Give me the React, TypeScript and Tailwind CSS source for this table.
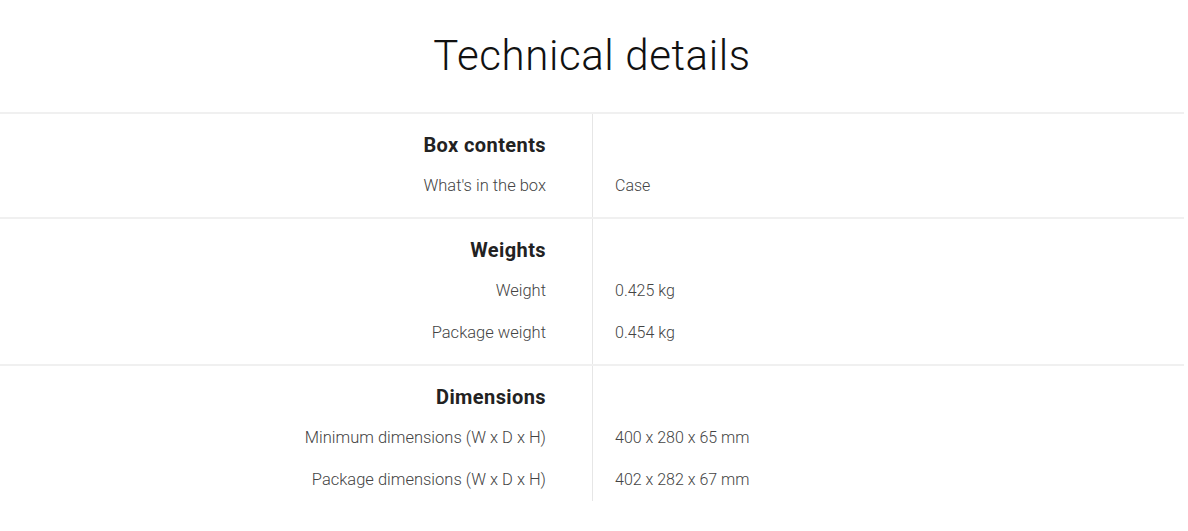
const sections = [
  {
    title: "Box contents",
    rows: [["What's in the box", "Case"]],
  },
  {
    title: "Weights",
    rows: [
      ["Weight", "0.425 kg"],
      ["Package weight", "0.454 kg"],
    ],
  },
  {
    title: "Dimensions",
    rows: [
      ["Minimum dimensions (W x D x H)", "400 x 280 x 65 mm"],
      ["Package dimensions (W x D x H)", "402 x 282 x 67 mm"],
    ],
  },
];

export default function App() {
  return (
    <div className="w-[1184px] bg-white font-['Roboto',sans-serif] text-[#333]">
      <h2 className="h-[112px] pb-[2px] flex items-center justify-center text-[42px] font-light text-[#111] tracking-[0.6px]">
        Technical details
      </h2>

      <div>
        {sections.map((section, i) => {
          const last = i === sections.length - 1;
          return (
            <div key={section.title} className="border-t-2 border-[#f0f0f0]">
              <div className="grid grid-cols-2">
                <div className="pt-[11px] pr-[46px]">
                  <div className="h-10 flex items-center justify-end text-[20px] font-bold text-[#222] tracking-[0.4px]">
                    {section.title}
                  </div>
                </div>
                <div className="border-l border-[#e6e6e6]" />
              </div>
              {section.rows.map(([label, value]) => (
                <div key={label} className="grid grid-cols-2">
                  <div className="h-[42px] flex items-center justify-end pr-[46px] text-[16.5px] font-light text-[#444]">
                    {label}
                  </div>
                  <div className="h-[42px] flex items-center pl-[22px] border-l border-[#e6e6e6] text-[16px] font-light text-[#444]">
                    {value}
                  </div>
                </div>
              ))}
              {!last && (
                <div className="grid grid-cols-2">
                  <div />
                  <div className="h-[10px] border-l border-[#e6e6e6]" />
                </div>
              )}
            </div>
          );
        })}
      </div>
    </div>
  );
}
